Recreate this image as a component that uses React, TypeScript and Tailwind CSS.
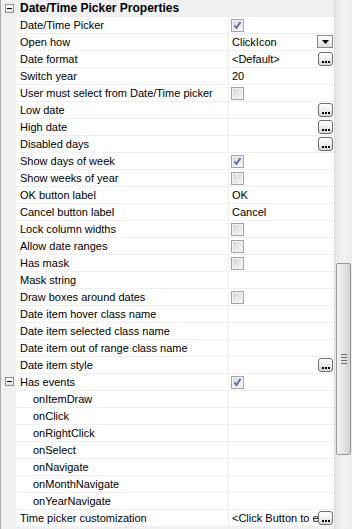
import React from "react";

type Row = {
	label: string;
	value?: string;
	check?: boolean;
	button?: "dots" | "drop";
	indent?: boolean;
	expander?: boolean;
};

const rows: Row[] = [
	{ label: "Date/Time Picker", check: true },
	{ label: "Open how", value: "ClickIcon", button: "drop" },
	{ label: "Date format", value: "<Default>", button: "dots" },
	{ label: "Switch year", value: "20" },
	{ label: "User must select from Date/Time picker", check: false },
	{ label: "Low date", button: "dots" },
	{ label: "High date", button: "dots" },
	{ label: "Disabled days", button: "dots" },
	{ label: "Show days of week", check: true },
	{ label: "Show weeks of year", check: false },
	{ label: "OK button label", value: "OK" },
	{ label: "Cancel button label", value: "Cancel" },
	{ label: "Lock column widths", check: false },
	{ label: "Allow date ranges", check: false },
	{ label: "Has mask", check: false },
	{ label: "Mask string" },
	{ label: "Draw boxes around dates", check: false },
	{ label: "Date item hover class name" },
	{ label: "Date item selected class name" },
	{ label: "Date item out of range class name" },
	{ label: "Date item style", button: "dots" },
	{ label: "Has events", check: true, expander: true },
	{ label: "onItemDraw", indent: true },
	{ label: "onClick", indent: true },
	{ label: "onRightClick", indent: true },
	{ label: "onSelect", indent: true },
	{ label: "onNavigate", indent: true },
	{ label: "onMonthNavigate", indent: true },
	{ label: "onYearNavigate", indent: true },
	{ label: "Time picker customization", value: "<Click Button to edit>", button: "dots" },
];

const Minus = () => (
	<div className="w-[9px] h-[9px] border border-[#919191] bg-gradient-to-b from-white to-[#e4e4e4] flex items-center justify-center">
		<div className="w-[5px] h-px bg-black" />
	</div>
);

const CheckBox = ({ checked }: { checked: boolean }) => (
	<div className="w-[13px] h-[13px] border border-[#a4a4a4] bg-[#f4f4f4] p-px">
		<div className="w-full h-full bg-gradient-to-br from-[#d8d8d8] to-[#f4f4f4] flex items-center justify-center">
			{checked && (
				<svg width="9" height="9" viewBox="0 0 9 9">
					<path d="M1.5 4.5 L3.5 7 L7.5 1" fill="none" stroke="#4a5d9c" strokeWidth="1.6" />
				</svg>
			)}
		</div>
	</div>
);

const DotsButton = () => (
	<div className="w-[15px] h-[14px] rounded-[3px] border border-[#6f6f6f] bg-gradient-to-b from-white via-[#f0f0f0] to-[#d6d6d6] flex items-end justify-center pb-[2px] gap-px">
		<div className="w-[2px] h-[2px] bg-black" />
		<div className="w-[2px] h-[2px] bg-black" />
		<div className="w-[2px] h-[2px] bg-black" />
	</div>
);

const DropButton = () => (
	<div className="w-[16px] h-[13px] border border-[#8a8a8a] bg-gradient-to-b from-white to-[#dedede] flex items-center justify-center">
		<svg width="7" height="4" viewBox="0 0 7 4">
			<path d="M0 0 H7 L3.5 4 Z" fill="#000" />
		</svg>
	</div>
);

const GridRow = ({ row }: { row: Row }) => (
	<div className="flex h-[17px] border-b border-[#f0f0f0]">
		<div className="w-[15px] shrink-0 bg-[#f0f0f0] pl-[4px] pt-[3px]">{row.expander && <Minus />}</div>
		<div
			className={`w-[212px] shrink-0 bg-white flex items-center overflow-hidden whitespace-nowrap ${
				row.indent ? "pl-[17px]" : "pl-[4px]"
			}`}
		>
			{row.label}
		</div>
		<div className="w-px shrink-0 bg-[#f0f0f0]" />
		<div className="flex-1 bg-white flex items-center relative overflow-hidden whitespace-nowrap">
			{row.check !== undefined ? (
				<div className="pl-[2px]">
					<CheckBox checked={row.check} />
				</div>
			) : (
				<span className={`pl-[3px] overflow-hidden ${row.button ? "w-[89px]" : ""}`}>{row.value}</span>
			)}
			{row.button && (
				<div className="absolute right-[1px] top-[1px]">{row.button === "dots" ? <DotsButton /> : <DropButton />}</div>
			)}
		</div>
	</div>
);

export default function App() {
	return (
		<div
			className="w-[352px] h-[529px] flex bg-[#f0f0f0] text-[11px] text-black overflow-hidden"
			style={{ fontFamily: '"Liberation Sans", Arial, sans-serif' }}
		>
			<div className="w-[334px] shrink-0 border-l border-[#a9a9a9] flex flex-col">
				<div className="flex h-[17px] border-b border-[#f0f0f0] bg-[#f0f0f0]">
					<div className="w-[15px] shrink-0 pl-[4px] pt-[4px]">
						<Minus />
					</div>
					<div className="pl-[4px] flex items-center font-bold text-[12px] whitespace-nowrap">
						Date/Time Picker Properties
					</div>
				</div>
				{rows.map((r, i) => (
					<GridRow key={i} row={r} />
				))}
			</div>
			<div className="w-[18px] shrink-0 border-l border-[#dcdcdc] bg-gradient-to-r from-[#e6e6e6] via-[#f2f2f2] to-[#ececec] flex flex-col pt-[263px]">
				<div className="ml-px w-[15px] h-[192px] rounded-[2px] border border-[#979797] bg-gradient-to-r from-[#f2f2f2] via-[#e4e4e4] to-[#d2d2d2] flex flex-col items-center justify-center gap-[2px]">
					<div className="w-[6px] h-px bg-[#6d6d6d]" />
					<div className="w-[6px] h-px bg-[#6d6d6d]" />
					<div className="w-[6px] h-px bg-[#6d6d6d]" />
					<div className="w-[6px] h-px bg-[#6d6d6d]" />
				</div>
			</div>
		</div>
	);
}
